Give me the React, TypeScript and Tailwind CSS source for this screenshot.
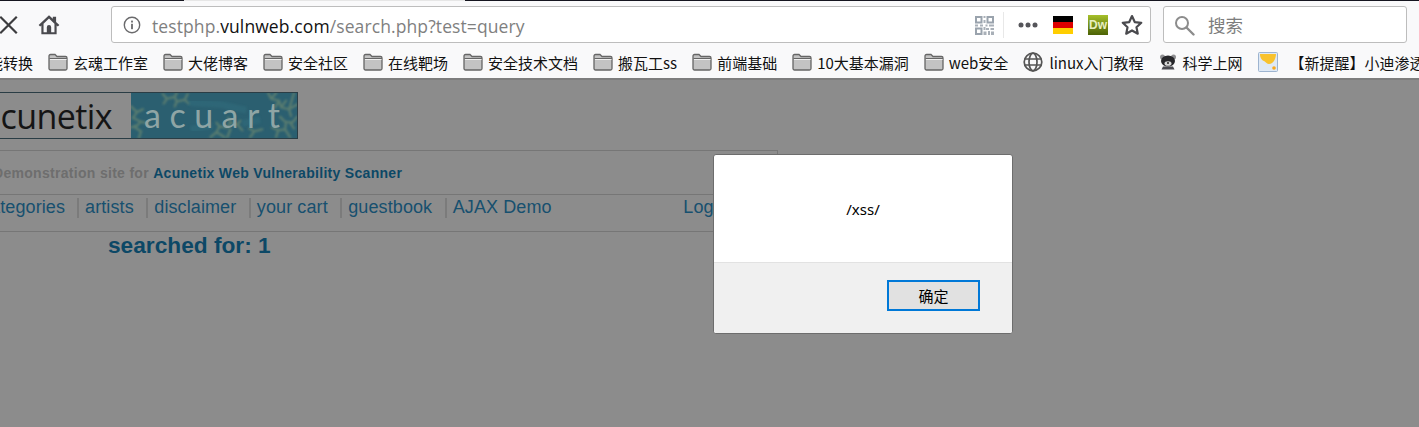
import React from "react";

const Folder = () => (
  <svg width="20" height="18" viewBox="0 0 20 18" className="shrink-0">
    <path d="M1 15.500V3a1.500 1.500 0 0 1 1.500-1.500h4.500l2 2h8.500a1.500 1.500 0 0 1 1.500 1.500v10.500a1.500 1.500 0 0 1-1.500 1.500H2.500A1.500 1.500 0 0 1 1 15.500z" fill="#c3c3c3" stroke="#666" strokeWidth="1.300" />
    <path d="M1.500 5.500h17.500" stroke="#666" strokeWidth="1" fill="none" />
    <path d="M2 6.500h16.500" stroke="#efefef" strokeWidth="1" fill="none" />
  </svg>
);

const Bookmark = ({ label }: { label: string }) => (
  <div className="flex items-center gap-[5px] shrink-0">
    <Folder />
    <span>{label}</span>
  </div>
);

const QR = () => (
  <svg width="19" height="19" viewBox="0 0 19 19" className="shrink-0">
    <g fill="none" stroke="#9aa3ad" strokeWidth="2">
      <rect x="1" y="1" width="5.500" height="5.500" />
      <rect x="12.500" y="1" width="5.500" height="5.500" />
      <rect x="1" y="12.500" width="5.500" height="5.500" />
    </g>
    <g fill="#a9b0b8">
      <rect x="8.500" y="0" width="2" height="2" />
      <rect x="8.500" y="4" width="2" height="3" />
      <rect x="0" y="8.500" width="3" height="2" />
      <rect x="5" y="8.500" width="3" height="2" />
      <rect x="10.500" y="8.500" width="2" height="2" />
      <rect x="14" y="8.500" width="5" height="2" />
      <rect x="8.500" y="11" width="2" height="3" />
      <rect x="11" y="12" width="3" height="2" />
      <rect x="15.500" y="12" width="3.500" height="2" />
      <rect x="8.500" y="15.500" width="3" height="3.500" />
      <rect x="13" y="15" width="2" height="4" />
      <rect x="16" y="15.500" width="3" height="3.500" />
    </g>
  </svg>
);

const Fractal = () => (
  <svg viewBox="0 0 167 47" preserveAspectRatio="none" className="absolute inset-0 h-full w-full">
    <defs>
      <filter id="soft" x="-5%" y="-5%" width="110%" height="110%">
        <feGaussianBlur stdDeviation="1" />
      </filter>
    </defs>
    <rect width="167" height="47" fill="#2b5f70" />
    <g stroke="#587c70" strokeWidth="2.400" fill="none" filter="url(#soft)" strokeLinecap="round">
      <path d="M0 14l6 6-4 6 8 4-6 6 6 4-2 7M6 20l6-3M10 30l7 2M0 36l5-2" />
      <path d="M32 1l4 5 8-2 2 5 8-2 4 4M36 6l-3 5M46 9l-2 5M54 7l3-6M44 4l2-4" />
      <path d="M80 46l6-5 3-6 8 1 3-5 7 2 3-4M89 35l-3-4M100 31l-2-5M86 41l8 5M107 33l5 6M100 38l-3 8" />
      <path d="M120 46l4-6 8-2M124 40l-5-3" />
      <path d="M146 46l2-7 7-1 1-8 6 1 5-6M148 39l-6-3M155 30l-5-5M160 31l4 6M155 38l5 8" />
      <path d="M138 0l3 6 8 2 2 7 8 2 8-5M141 6l5-6M149 8l-4 7M151 15l5-7M159 17l2 7M159 17l5-17" />
    </g>
    <g stroke="#336e7e" strokeWidth="7" opacity="0.5" fill="none" filter="url(#soft)">
      <path d="M58 10l32 2 26 6M60 38l22-4M112 32l18-4" />
    </g>
  </svg>
);

const Nav = ({ children }: { children: React.ReactNode }) => (
  <span className="flex items-start">
    <span className="mt-[1px] h-[20px] w-[2px] bg-[#7b7b7b]" />
    <span className="pl-[6px] pr-[12.500px]">{children}</span>
  </span>
);

export default function App() {
  return (
    <div className="relative h-[427px] w-[1419px] overflow-hidden bg-[#8c8c8c] font-['Liberation_Sans',sans-serif]">
      {/* window top strip */}
      <div className="flex h-px">
        <div className="w-[184px] bg-[#15151f]" />
        <div className="w-[281px] bg-[#e6e6e6]" />
        <div className="flex-1 bg-[#15151f]" />
      </div>

      {/* navigation toolbar */}
      <div className="flex h-[45px] items-center bg-[#f9f9fa] pt-[2px]">
        <svg width="20" height="20" viewBox="0 0 20 20" className="ml-[-1px] mt-[1px] shrink-0">
          <path d="M2 2.500l15 15M17 2.500l-15 15" stroke="#3c3c3e" strokeWidth="2.200" strokeLinecap="square" fill="none" />
        </svg>
        <svg width="24" height="24" viewBox="0 0 22 22" className="ml-[18px] mt-[1px] shrink-0">
          <path d="M1.500 11L11 2l3.500 3.300V3.500h3v4.700l3 2.800-1.400 1.400-1.100-1v8.100H4v-8.100l-1.100 1z" fill="#4a4a4e" />
          <path d="M6 9.800L11 5l5 4.800V17.600h-3v-4.600a2 2 0 0 0-4 0v4.600H6z" fill="#f9f9fa" />
          <rect x="9.800" y="13.500" width="2.400" height="4" fill="#4a4a4e" />
        </svg>

        {/* URL bar */}
        <div className="ml-[50px] flex h-[37px] w-[1040px] shrink-0 items-center rounded-[3px] border border-[#bdbdbd] bg-white pl-[11px] pr-[8px] pt-[1px]">
          <svg width="18" height="18" viewBox="0 0 18 18" className="shrink-0">
            <circle cx="9" cy="9" r="7.700" fill="none" stroke="#6a6a6c" strokeWidth="1.400" />
            <rect x="8.100" y="7.800" width="1.800" height="5.400" fill="#6a6a6c" />
            <rect x="8.100" y="4.600" width="1.800" height="1.900" fill="#6a6a6c" />
          </svg>
          <div className="ml-[11px] whitespace-nowrap pt-[2px] font-['Open_Sans',sans-serif] text-[17.500px] tracking-[0.1px] text-[#7f7f7f]">
            testphp.<span className="text-[#111]">vulnweb.com</span>/search.php?test=query
          </div>
          <div className="flex-1" />
          <QR />
          <div className="ml-[9px] h-[26px] w-px bg-[#e8e8e8]" />
          <svg width="20" height="6" viewBox="0 0 20 6" className="ml-[14px] shrink-0">
            <circle cx="3" cy="3" r="2.500" fill="#55555a" />
            <circle cx="10" cy="3" r="2.500" fill="#55555a" />
            <circle cx="17" cy="3" r="2.500" fill="#55555a" />
          </svg>
          <div className="ml-[15px] flex h-[18px] w-5 shrink-0 flex-col">
            <div className="flex-1 bg-black" />
            <div className="flex-1 bg-[#dd0000]" />
            <div className="flex-1 bg-[#ffce00]" />
          </div>
          <div className="ml-[15px] flex h-5 w-5 shrink-0 items-center justify-center bg-gradient-to-b from-[#a6c02a] to-[#4c6206] text-[12px] font-bold leading-none text-[#e8efc0]">
            Dw
          </div>
          <svg width="24" height="24" viewBox="0 0 22 22" className="ml-[12px] mr-[-2px] shrink-0">
            <path d="M11 2.800l2.500 5.500 6 .7-4.400 4.100 1.200 5.900L11 16l-5.300 3 1.200-5.900L2.500 9l6-.7z" fill="none" stroke="#4a4a4e" strokeWidth="2" strokeLinejoin="round" />
          </svg>
        </div>

        {/* Search bar */}
        <div className="ml-3 flex h-[37px] w-[244px] shrink-0 items-center rounded-[3px] border border-[#bdbdbd] bg-white pl-[10px] pt-[1px]">
          <svg width="21" height="21" viewBox="0 0 21 21" className="shrink-0">
            <circle cx="8" cy="8" r="6" fill="none" stroke="#8c8c8c" strokeWidth="2" />
            <path d="M12.500 12.500l7 7" stroke="#8c8c8c" strokeWidth="2.400" strokeLinecap="round" />
          </svg>
          <span className="ml-[13px] font-['Noto_Sans_CJK_SC',sans-serif] text-[17.500px] leading-none text-[#7d7d7d]">搜索</span>
        </div>
      </div>

      {/* bookmarks */}
      <div className="flex h-[32px] items-center gap-[15px] overflow-hidden whitespace-nowrap bg-[#f9f9fa] font-['Noto_Sans_CJK_SC',sans-serif] text-[15px] leading-none text-[#111]">
        <span className="ml-[-12px] shrink-0">能转换</span>
        <Bookmark label="玄魂工作室" />
        <Bookmark label="大佬博客" />
        <Bookmark label="安全社区" />
        <Bookmark label="在线靶场" />
        <Bookmark label="安全技术文档" />
        <Bookmark label="搬瓦工ss" />
        <Bookmark label="前端基础" />
        <Bookmark label="10大基本漏洞" />
        <Bookmark label="web安全" />
        <div className="flex shrink-0 items-center gap-[6px]">
          <svg width="20" height="20" viewBox="0 0 20 20" className="shrink-0">
            <g fill="none" stroke="#555" strokeWidth="1.700">
              <circle cx="10" cy="10" r="8.800" />
              <ellipse cx="10" cy="10" rx="4" ry="8.800" />
              <path d="M1.500 7h17M1.500 13h17" />
            </g>
          </svg>
          <span>linux入门教程</span>
        </div>
        <div className="flex shrink-0 items-center gap-[6px]">
          <svg width="18" height="18" viewBox="0 0 18 18" className="shrink-0">
            <circle cx="3.500" cy="4" r="2.500" fill="#8f8f92" />
            <circle cx="14.500" cy="4" r="2.500" fill="#8f8f92" />
            <ellipse cx="9" cy="8" rx="7" ry="5.500" fill="#26262a" />
            <ellipse cx="9" cy="10.500" rx="3.500" ry="2.300" fill="#d8d8d8" />
            <circle cx="9" cy="10" r="1" fill="#222" />
            <path d="M4 13.500h10l1.500 3h-13z" fill="#4a4a50" />
          </svg>
          <span>科学上网</span>
        </div>
        <div className="flex shrink-0 items-center gap-[12px]">
          <svg width="20" height="20" viewBox="0 0 20 20" className="shrink-0">
            <rect x=".5" y=".5" width="19" height="19" rx="1" fill="#dfe9f5" stroke="#9db4d0" />
            <path d="M2 2h16c0 5-3 10-7 10-2 0-3-2-5-3-2-.5-4-3-4-7z" fill="#f8c22e" />
            <circle cx="16" cy="16" r="1.800" fill="#f8a81e" />
          </svg>
          <span>【新提醒】小迪渗透</span>
        </div>
      </div>

      {/* toolbar bottom border */}
      <div className="h-[2px] bg-[#7d7d7d]" />

      {/* dimmed page */}
      <div className="pt-3">
        <div className="ml-[-20px] w-[798px]">
          <div className="flex h-[47px] w-[318px] border border-[#2a3d45]">
            <div className="flex w-[150px] shrink-0 items-center justify-end whitespace-nowrap pr-[19px] font-['Open_Sans',sans-serif] text-[34px] leading-none tracking-[-0.6px] text-[#151515]">
              acunetix
            </div>
            <div className="relative flex-1 overflow-hidden">
              <Fractal />
              <div className="relative flex h-full items-center pb-[2px] pl-[13px] font-['Lato',sans-serif] text-[34px] leading-none tracking-[8.500px] text-[#8fa5a5]">
                acuart
              </div>
            </div>
          </div>

          <div className="mt-[11px] border-t border-r border-[#767676]">
            <div className="flex h-[44px] items-center border-b border-[#767676] pl-[13px] pt-[2px] text-[14px] font-bold tracking-[0.3px] text-[#6e6e6e]">
              Demonstration site for&nbsp;<span className="text-[#0c4866]">Acunetix Web Vulnerability Scanner</span>
            </div>
            <div className="flex h-[37px] items-start border-b border-[#767676] pt-[2px] text-[18px] leading-[21px] tracking-[0.1px] text-[#17506f]">
              <span className="ml-[-12px] pl-[13px] pr-[12px]">categories</span>
              <Nav>artists</Nav>
              <Nav>disclaimer</Nav>
              <Nav>your cart</Nav>
              <Nav>guestbook</Nav>
              <Nav>AJAX Demo</Nav>
              <span className="ml-auto pr-[38px]">Logout</span>
            </div>
          </div>
          <div className="pl-[128px] text-[22.700px] font-bold leading-[26px] text-[#0c4866]">searched for: 1</div>
        </div>
      </div>

      {/* alert dialog */}
      <div className="absolute left-[713px] top-[154px] flex h-[180px] w-[300px] flex-col overflow-hidden rounded-[3px] border border-[#6d6d6d] bg-white">
        <div className="flex h-[107px] items-start justify-center pt-[44px] font-['Noto_Sans',sans-serif] text-[15px] leading-5 text-black">
          /xss/
        </div>
        <div className="flex flex-1 items-start justify-end border-t border-[#e2e2e2] bg-[#f0f0f0] pr-[32px] pt-[17px]">
          <button className="flex h-[31px] w-[93px] items-center justify-center border-2 border-[#0078d7] bg-[#e1e1e1] font-['Noto_Sans_CJK_SC',sans-serif] text-[15px] leading-none text-black">
            确定
          </button>
        </div>
      </div>
    </div>
  );
}
